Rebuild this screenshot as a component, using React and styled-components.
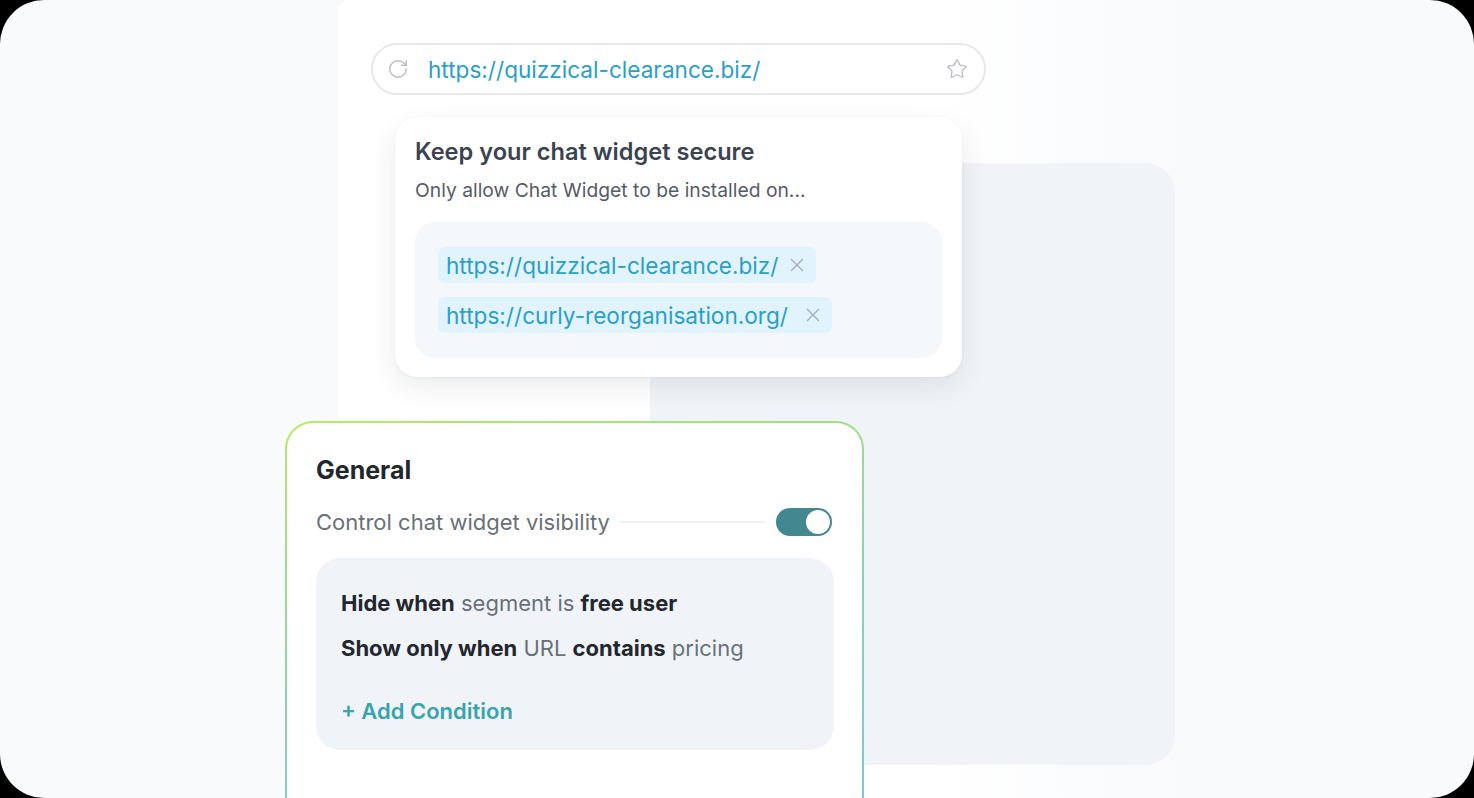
import React from "react";
import styled, { createGlobalStyle } from "styled-components";
import { RotateCw, Star, X } from "lucide-react";

const Global = createGlobalStyle`
  html, body { margin: 0; padding: 0; background: #000; }
  body { font-family: "Inter", "Noto Sans", sans-serif; -webkit-font-smoothing: antialiased; }
  * { box-sizing: border-box; }
`;

const Frame = styled.div`
  width: 1474px;
  height: 798px;
  background: #000;
`;

const Canvas = styled.div`
  position: relative;
  width: 100%;
  height: 100%;
  border-radius: 44px;
  background: #f8fafc;
  overflow: hidden;
  display: flex;
`;

const BrowserPanel = styled.div`
  position: relative;
  margin-left: 338px;
  width: 860px;
  height: 100%;
  background: linear-gradient(90deg, #ffffff 0%, #ffffff 70%, rgba(255,255,255,0) 100%);
  border-top-left-radius: 12px;
  display: flex;
  flex-direction: column;
  align-items: flex-start;
  padding-top: 43px;
`;

const Backdrop = styled.div`
  position: absolute;
  left: 312px;
  top: 163px;
  width: 525px;
  height: 602px;
  border-radius: 30px;
  background: #f0f4f8;
  z-index: 0;
`;

const AddressBar = styled.div`
  position: relative;
  z-index: 1;
  margin-left: 33px;
  width: 615px;
  height: 52px;
  border: 2px solid #e6e8eb;
  border-radius: 26px;
  background: #fff;
  display: flex;
  align-items: center;
  padding: 0 16px 0 14px;
  gap: 19px;
  color: #b9bdc3;
`;

const Url = styled.span`
  flex: 1;
  font-size: 22.6px;
  color: #2a9fc7;
`;

const Popup = styled.section`
  position: relative;
  z-index: 2;
  margin-left: 57px;
  margin-top: 22px;
  width: 567px;
  padding: 21px 20px 19px;
  background: #fff;
  border-radius: 22px;
  box-shadow: 0 10px 28px rgba(30, 41, 59, 0.09), 0 1px 3px rgba(30, 41, 59, 0.05);
`;

const PopupTitle = styled.h2`
  margin: 0;
  font-size: 23.6px;
  line-height: 28px;
  font-weight: 600;
  color: #3b4350;
`;

const PopupSub = styled.p`
  margin: 12px 0 0;
  font-size: 19.3px;
  line-height: 24px;
  color: #555c66;
`;

const TagBox = styled.div`
  margin-top: 20px;
  padding: 25px 23px;
  border-radius: 20px;
  background: #f4f8fb;
  display: flex;
  flex-direction: column;
  align-items: flex-start;
  gap: 14px;
`;

const Tag = styled.span`
  display: inline-flex;
  align-items: center;
  gap: ${(p) => p.$gap || 8}px;
  height: 36px;
  padding: 0 8px 0 8px;
  border-radius: 6px;
  background: #e1f3fc;
  color: #2a9fc7;
  font-size: 22.6px;
  svg { color: #a4abb3; }
`;

const GeneralCard = styled.section`
  position: absolute;
  left: 285px;
  top: 421px;
  width: 579px;
  height: 420px;
  z-index: 3;
  border-radius: 28px;
  border: 2px solid transparent;
  background:
    linear-gradient(#fff, #fff) padding-box,
    linear-gradient(165deg, #b6ec5a 0%, #8fd5a8 45%, #6ccbe6 100%) border-box;
  padding: 30px 30px 0 29px;
`;

const GeneralTitle = styled.h3`
  margin: 0;
  font-size: 25px;
  line-height: 34px;
  font-weight: 700;
  color: #23272d;
`;

const ControlRow = styled.div`
  margin-top: 21px;
  display: flex;
  align-items: center;
  gap: 10px;
`;

const ControlLabel = styled.span`
  font-size: 22px;
  color: #6a7078;
  white-space: nowrap;
`;

const Rule = styled.span`
  flex: 1;
  height: 2px;
  background: #eff1f3;
  margin-right: 1px;
`;

const Toggle = styled.span`
  position: relative;
  width: 56px;
  height: 28px;
  border-radius: 14px;
  background: #438791;
  flex: none;
  &::after {
    content: "";
    position: absolute;
    right: 2px;
    top: 2px;
    width: 24px;
    height: 24px;
    border-radius: 50%;
    background: #fff;
  }
`;

const ConditionBox = styled.div`
  margin-top: 22px;
  width: 518px;
  height: 192px;
  border-radius: 24px;
  background: #f0f4f8;
  padding: 30px 25px 0;
  display: flex;
  flex-direction: column;
`;

const ConditionLine = styled.p`
  margin: 0 0 15px;
  font-size: 22px;
  line-height: 30px;
  color: #6a7078;
  b { font-weight: 700; color: #23272d; }
`;

const AddCondition = styled.span`
  margin-top: 18px;
  font-size: 22px;
  line-height: 30px;
  font-weight: 600;
  color: #3aa3ad;
`;

export default function App() {
  return (
    <Frame>
      <Global />
      <Canvas>
        <BrowserPanel>
          <Backdrop />
          <AddressBar>
            <RotateCw size={22} strokeWidth={1.6} />
            <Url>https://quizzical-clearance.biz/</Url>
            <Star size={22} strokeWidth={1.4} />
          </AddressBar>
          <Popup>
            <PopupTitle>Keep your chat widget secure</PopupTitle>
            <PopupSub>Only allow Chat Widget to be installed on...</PopupSub>
            <TagBox>
              <Tag>https://quizzical-clearance.biz/<X size={22} strokeWidth={1.4} /></Tag>
              <Tag $gap={14}>https://curly-reorganisation.org/<X size={22} strokeWidth={1.4} /></Tag>
            </TagBox>
          </Popup>
        </BrowserPanel>
        <GeneralCard>
          <GeneralTitle>General</GeneralTitle>
          <ControlRow>
            <ControlLabel>Control chat widget visibility</ControlLabel>
            <Rule />
            <Toggle />
          </ControlRow>
          <ConditionBox>
            <ConditionLine><b>Hide when</b> segment is <b>free user</b></ConditionLine>
            <ConditionLine><b>Show only when</b> URL <b>contains</b> pricing</ConditionLine>
            <AddCondition>+ Add Condition</AddCondition>
          </ConditionBox>
        </GeneralCard>
      </Canvas>
    </Frame>
  );
}
